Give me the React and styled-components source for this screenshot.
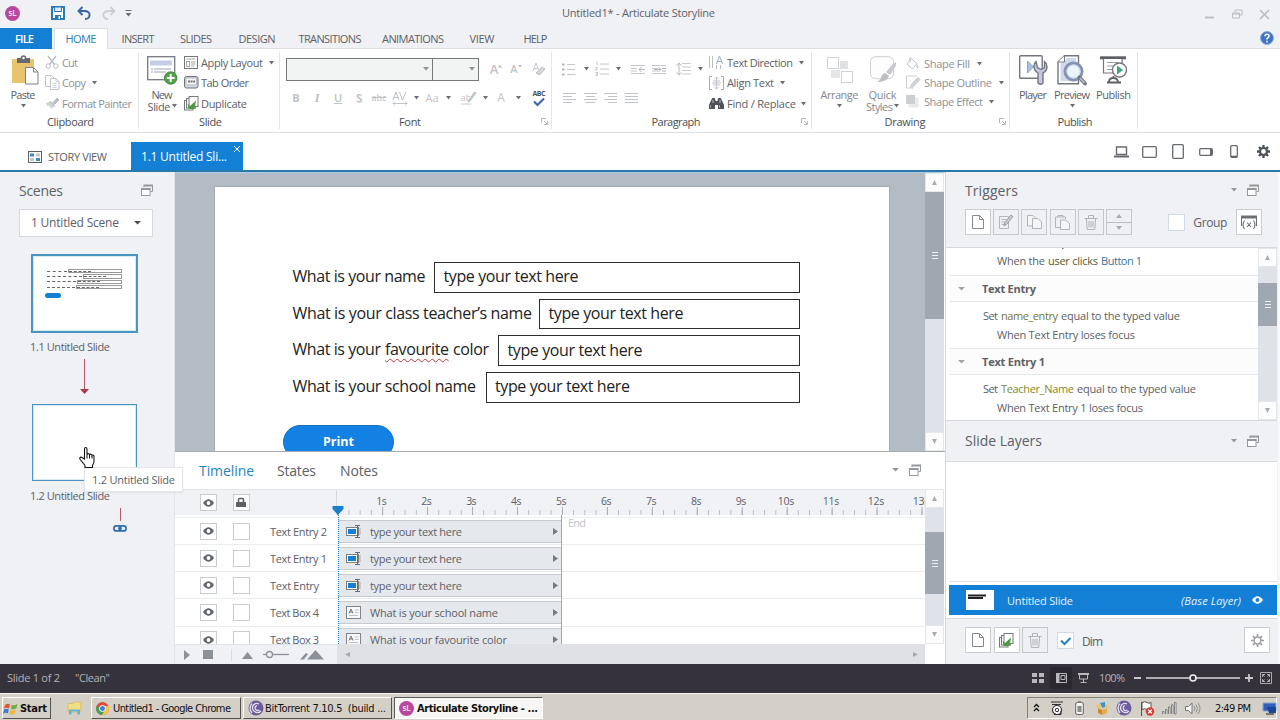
import React, { useLayoutEffect, useRef } from 'react';
import styled, { createGlobalStyle, css } from 'styled-components';

const Global = createGlobalStyle`
  * { box-sizing: border-box; }
  html, body { margin: 0; padding: 0; overflow: hidden; }
  body { font-family: 'Open Sans', 'Noto Sans', sans-serif; font-size: 11px; color: #5c6067; }
`;

const c = {
  panel: '#eff1f5',
  blue: '#1380d6',
  line: '#dcdfe4',
  text: '#5c6067',
  dim: '#8d9095',
  faint: '#c3c6ca',
  track: '#dfe3e9',
  thumb: '#9fa8b1',
};

/* ---------- text fitted to a given advance width ---------- */
const TextSpan = styled.span`
  display: inline-block;
  flex: none;
  white-space: pre;
  font-size: ${p => p.$s || 11}px;
  line-height: ${p => Math.round((p.$s || 11) * 1.36)}px;
  color: ${p => p.$c || 'inherit'};
  font-weight: ${p => p.$b || 400};
  font-style: ${p => (p.$i ? 'italic' : 'normal')};
`;

function T({ w, s, c: color, b, i, children }) {
  const ref = useRef(null);
  useLayoutEffect(() => {
    const el = ref.current;
    el.style.letterSpacing = '0px';
    const n = el.textContent.length;
    if (w && n > 1) {
      const gap = (w - el.getBoundingClientRect().width) / (n - 1);
      el.style.letterSpacing = `${gap}px`;
      el.style.marginRight = `${-gap}px`;
    }
  }, [w, children]);
  return <TextSpan ref={ref} $s={s} $c={color} $b={b} $i={i}>{children}</TextSpan>;
}

/* ---------- icon helpers ---------- */
const Svg = styled.svg`
  display: block;
  flex: none;
  overflow: visible;
  fill: none;
`;
const I = ({ w, h, children, ...r }) => (
  <Svg width={w} height={h} viewBox={`0 0 ${w} ${h}`} {...r}>{children}</Svg>
);
const Caret = ({ color = '#6b6e73', w = 6 }) => (
  <I w={w} h={3.5}><path d={`M0 0H${w}L${w / 2} 3.5Z`} fill={color} /></I>
);

/* ---------- title bar ---------- */
const App_ = styled.div`
  width: 1280px;
  height: 720px;
  display: flex;
  flex-direction: column;
  background: #fff;
  overflow: hidden;
`;
const TitleBar = styled.div`
  height: 28px;
  flex: none;
  display: grid;
  grid-template-columns: 142px 1fr 142px;
  align-items: center;
  padding-bottom: 2px;
  background: ${c.panel};
`;
const QuickAccess = styled.div`
  display: flex;
  align-items: center;
  padding-left: 5px;
`;
const Title = styled.div`
  display: flex;
  justify-content: center;
  padding: 0 3px 1px 0;
`;
const WindowButtons = styled.div`
  display: flex;
  justify-content: flex-end;
  align-items: center;
  gap: 17px;
  padding: 2px 11px 0 0;
`;
const Gap = styled.div`
  flex: none;
  width: ${p => p.$w || 0}px;
`;

const MenuBar = styled.div`
  height: 21px;
  flex: none;
  display: flex;
  background: ${c.panel};
  border-bottom: 1px solid ${c.line};
`;
const MenuTab = styled.div`
  width: ${p => p.$w}px;
  height: 21px;
  display: flex;
  align-items: center;
  justify-content: center;
  padding-bottom: 1px;
  color: ${c.text};
  ${p => p.$file && css`background: ${c.blue}; color: #fff; font-weight: 600; margin-right: 2px; padding-right: 3px;`}
  ${p => p.$active && css`background: #fff; color: #2b7fb8; border: 1px solid ${c.line}; border-bottom: 0; padding-bottom: 2px;`}
`;
const HelpSlot = styled.div`
  margin-left: auto;
  padding: 3px 6px 0 0;
`;

/* ---------- ribbon ---------- */
const Ribbon = styled.div`
  height: 84px;
  flex: none;
  display: flex;
  padding: 3px 0;
  border-bottom: 1px solid ${c.line};
`;
const Group = styled.div`
  width: ${p => p.$w}px;
  flex: none;
  display: flex;
  flex-direction: column;
  border-right: 1px solid #e3e5e8;
`;
const GroupBody = styled.div`
  height: 62px;
  display: flex;
  padding-left: ${p => p.$pl || 0}px;
`;
const GroupLabel = styled.div`
  height: 16px;
  display: grid;
  grid-template-columns: ${p => (p.$plain ? '1fr' : '1fr 9px')};
  align-items: center;
  justify-items: center;
  padding: 0 ${p => (p.$plain ? 0 : 2)}px 0 ${p => (p.$plain ? 3 : 0)}px;
  color: #4b4f55;
`;
const BigButton = styled.div`
  width: ${p => p.$w}px;
  flex: none;
  display: flex;
  flex-direction: column;
  align-items: center;
  color: ${p => (p.$off ? '#85888d' : c.text)};
`;
const BigIcon = styled.div`
  height: 36px;
  display: flex;
  align-items: center;
`;
const BigLine = styled.div`
  height: 12px;
  display: flex;
  align-items: center;
  gap: 1px;
  > span { line-height: 11px; }
`;
const SmallCol = styled.div`
  display: flex;
  flex-direction: column;
  padding-top: ${p => p.$pt || 0}px;
  padding-left: ${p => p.$pl || 0}px;
`;
const SmallButton = styled.div`
  height: ${p => p.$h || 20.5}px;
  display: flex;
  align-items: center;
  color: ${p => (p.$off ? '#8e9196' : c.text)};
`;
const SmallIcon = styled.div`
  width: ${p => p.$w || 17}px;
  display: flex;
  justify-content: flex-start;
`;
const CaretSlot = styled.div`
  margin-left: ${p => p.$ml || 6}px;
`;
const ToolStack = styled.div`
  display: flex;
  flex-direction: column;
  width: ${p => p.$w}px;
  flex: none;
`;
const ToolRow = styled.div`
  height: ${p => p.$h}px;
  display: flex;
  align-items: center;
  color: #bfc2c6;
`;
const Slot = styled.div`
  width: ${p => p.$w}px;
  flex: none;
  display: flex;
  justify-content: center;
  align-items: center;
`;
const Combo = styled.div`
  width: ${p => p.$w}px;
  height: 23px;
  flex: none;
  display: flex;
  align-items: center;
  justify-content: flex-end;
  padding-right: 3px;
  background: #f2f3f3;
  border: 1px solid #76797c;
  & + & { margin-left: -1px; }
`;
const Glyph = styled.span`
  font-size: ${p => p.$s || 11}px;
  line-height: 14px;
  font-weight: ${p => p.$b || 600};
  font-style: ${p => (p.$i ? 'italic' : 'normal')};
  font-family: ${p => (p.$i ? "'Liberation Serif', serif" : 'inherit')};
  text-decoration: ${p => p.$d || 'none'};
  text-shadow: ${p => (p.$shadow ? '1px 1px 0 #dcdee0' : 'none')};
  color: ${p => p.$c || '#bfc2c6'};
`;
const SpellSlot = styled.div`
  width: 28px;
  display: flex;
  flex-direction: column;
  align-items: center;
  padding-left: 2px;
`;

const Launcher = () => (
  <I w={7} h={7}><path d="M.5 5V.5H5M3 3l3 3M6.5 3v3.5H3" stroke="#b4b7bb" /></I>
);

const Small = ({ icon, label, w, caret, off, ml, h, iw }) => (
  <SmallButton $off={off} $h={h}>
    <SmallIcon $w={iw}>{icon}</SmallIcon>
    <T w={w}>{label}</T>
    {caret && <CaretSlot $ml={ml}><Caret w={5} /></CaretSlot>}
  </SmallButton>
);

/* ---------- ribbon icons ---------- */
const PasteIcon = () => (
  <I w={28} h={30}>
    <rect x="1" y="4" width="22" height="24" fill="#e9c46f" />
    <rect x="6" y="3" width="13" height="5" fill="#666a70" /><circle cx="12.500" cy="3" r="2" fill="#fff" stroke="#666a70" strokeWidth="1.500" />
    <path d="M14.500 12.500h8l4.500 4.500v12h-12.500z" fill="#fff" stroke="#7b7e83" /><path d="M22.500 12.500v4.500h4.500" stroke="#7b7e83" />
  </I>
);
const CutIcon = () => (
  <I w={14} h={14}><path d="M3 1l6.500 8.500M11 1L4.500 9.500" stroke="#b9bcc0" strokeWidth="1.400" /><circle cx="3.200" cy="11" r="2.200" stroke="#b9bcc0" /><circle cx="10.800" cy="11" r="2.200" stroke="#b9bcc0" /></I>
);
const CopyIcon = ({ s = '#bfc2c6' }) => (
  <I w={15} h={15}><path d="M.5.5h6l2 2v9h-8z" stroke={s} fill="#fff" /><path d="M5.500 3.500h5.500l3 3v8H5.500z" fill="#fff" stroke={s} /><path d="M11 3.500v3h3M7.500 8.500h4M7.500 10.500h4M7.500 12.500h4" stroke={s} strokeWidth=".8" /></I>
);
const PainterIcon = () => (
  <I w={14} h={13}><path d="M1 6l5-2 4 4-3 4-1.500-2L4 11l.5-2.500L2 9z" fill="#d2d5d8" /><path d="M5 4.500l5 5M8 6l4-5 2 2-4 4z" fill="#babdc1" stroke="#b5b8bb" /></I>
);
const NewSlideIcon = () => (
  <I w={30} h={29}>
    <rect x=".7" y=".7" width="27" height="23" fill="#fff" stroke="#76797f" strokeWidth="1.300" />
    <rect x="3" y="4.500" width="22" height="5" fill="#c4cde4" /><path d="M4 13h2M7 13h17M4 16h2M7 16h12" stroke="#9da3b4" />
    <circle cx="23.700" cy="22" r="6.200" fill="#4fa246" stroke="#3b8937" /><path d="M23.700 18v8M19.700 22h8" stroke="#fff" strokeWidth="2" />
  </I>
);
const LayoutIcon = () => (
  <I w={14} h={13}><rect x=".5" y=".5" width="13" height="12" stroke="#74777c" /><path d="M2.500 3h9M7 6h4.500M7 8h4.500M7 10h3" stroke="#a3a6aa" /><rect x="2.500" y="5.500" width="3" height="5" stroke="#a3a6aa" /></I>
);
const TabOrderIcon = () => (
  <I w={15} h={13}><rect x=".5" y=".5" width="13.500" height="11.500" rx="2" fill="#d5d8dc" stroke="#6f7277" /><rect x="2" y="2" width="10.500" height="7" rx="1" fill="#f3f4f6" stroke="#a3a6aa" strokeWidth=".7" /><path d="M4 5.500h7" stroke="#6f7277" strokeWidth="2" strokeDasharray="2 .6" /></I>
);
const DuplicateIcon = () => (
  <I w={15} h={15}><rect x=".5" y="4.500" width="8.500" height="9.500" fill="#fff" stroke="#75787c" /><rect x="2.500" y="2.500" width="9" height="9.500" fill="#fff" stroke="#75787c" /><rect x="5" y=".5" width="9" height="10" fill="#fff" stroke="#75787c" /><path d="M3.500 7.500l2.500 2.500 6-5.500-1.500 8.500H4.500z" fill="#4d9a45" /></I>
);
const BulletsIcon = () => (
  <I w={14} h={13}><path d="M5 1.500h8M5 6.500h8M5 11.500h8" stroke="#c3c6ca" /><path d="M0 1.500h2.500M0 6.500h2.500M0 11.500h2.500" stroke="#b0b3b7" strokeWidth="1.800" /></I>
);
const NumbersIcon = () => (
  <I w={14} h={14}><path d="M5 2h9M5 7h9M5 12h9M1 0h1v3M.5 5.500h2L.5 8h2M.5 10.500h2v3h-2m0-1.500h2" stroke="#bdc0c4" strokeWidth=".9" /></I>
);
const IndentIcon = ({ out }) => (
  <I w={14} h={9}><path d="M0 .5h14M0 8.500h14M0 3.500h6M0 6h6" stroke="#c3c6ca" /><path d={out ? 'M14 4.500H8M10.500 2L8 4.500 10.500 7' : 'M2 4.500h7M6.500 2L9 4.500 6.500 7M10 3.500h4M10 6h4'} stroke="#aeb1b5" /></I>
);
const SpacingIcon = () => (
  <I w={15} h={14}><path d="M6 1.500h9M6 5h9M6 8.500h9M6 12h9" stroke="#c8cbce" /><path d="M3 1v12M.5 3.500L3 1l2.500 2.500M.5 10.500L3 13l2.500-2.500" stroke="#b4b7bb" /></I>
);
const AlignIcon = ({ kind }) => {
  const d = {
    left: 'M0 .5h13M0 3.500h9M0 6.500h13M0 9.500h9',
    center: 'M0 .5h13M2 3.500h9M0 6.500h13M2 9.500h9',
    right: 'M0 .5h13M4 3.500h9M0 6.500h13M4 9.500h9',
    full: 'M0 .5h13M0 3.500h13M0 6.500h13M0 9.500h13',
  }[kind];
  return <I w={13} h={10}><path d={d} stroke="#c0c3c7" /></I>;
};
const TextDirIcon = () => (
  <I w={14} h={13}><path d="M.5 0v12M3.500 0v12M7.500 9v4M11.500 9v4" stroke="#babdc1" /><path d="M7.500 8L10.500 0l3 8M8.500 5.500h4" stroke="#9fabc8" /></I>
);
const AlignTextIcon = () => (
  <I w={15} h={14}><path d="M3 .5H.5v13H3M12 .5h2.500v13H12" stroke="#a9acb0" /><path d="M3 7h9M7.500 1v12M5.500 3l2-2 2 2M5.500 11l2 2 2-2M4 5h7M4 9h7" stroke="#c0c3c7" /></I>
);
const BinocularsIcon = () => (
  <I w={15} h={12}><path d="M3 1.500Q4.500 0 6 1.500L6.500 4h2L9 1.500Q10.500 0 12 1.500L15 8v4H9V8H6v4H0V8z" fill="#4f5257" /><path d="M1.500 8.500v2M10.500 8.500v2M4 3v3M11 3v3" stroke="#d8dadd" strokeWidth=".8" /></I>
);
const ArrangeIcon = () => (
  <I w={26} h={26}><rect x="13" y="4" width="8" height="8" fill="#dfe1e3" /><rect x="4" y="13" width="9" height="8" fill="#e3e5e7" /><rect x=".5" y=".5" width="11" height="11" fill="#fff" stroke="#cfd1d4" /><rect x="14.500" y="14.500" width="11" height="11" fill="#fff" stroke="#cfd1d4" /></I>
);
const QuickIcon = () => (
  <I w={28} h={28}><rect x="1.500" y=".7" width="23" height="22" rx="5" fill="#fdfdfd" stroke="#cdcfd2" /><path d="M27 6q1 3-2 7l-4 6-4-3 6-7q2-2 4-3z" fill="#c8cacd" /><path d="M16 17l4 3q-2 6-12 6 4-2 4-5 1-3 4-4z" fill="#bcbec2" /></I>
);
const FillIcon = () => (
  <I w={13} h={13}><path d="M5 1.500l6 5-4.500 5.500-5.500-5zM4 0v5" stroke="#c0c3c7" /><path d="M11 7q2 3 1 4t-1.500-.5z" fill="#c0c3c7" /></I>
);
const OutlineIcon = () => (
  <I w={14} h={13}><path d="M11 0H.5v12H8" stroke="#cdd0d3" /><path d="M12 1.500l2 2-6 6.500-3.500 1.500L5.500 8z" fill="#d0d3d6" stroke="#bcbfc3" strokeWidth=".7" /></I>
);
const EffectIcon = () => (
  <I w={13} h={13}><rect x="2.500" y="2.500" width="10" height="10" fill="#e8eaec" /><rect x="0" y="0" width="9" height="9" fill="#cdd0d3" /></I>
);
const PlayerIcon = () => (
  <I w={29} h={31}>
    <rect x=".7" y=".7" width="22.500" height="22.500" rx="1" fill="#fff" stroke="#74777d" strokeWidth="1.400" />
    <path d="M8.500 6v12l6-6z" fill="#aabfe4" stroke="#7a8bb0" strokeWidth=".7" />
    <path d="M17 6.500q-4 4-.5 9.500l2.500 2v10q2.500 2.500 5 0V18q4-2 4-6.500 0-3-2.500-5v6l-3.500 2-3.500-2z" fill="#c2c9e2" stroke="#74777f" strokeWidth="1.400" />
  </I>
);
const PreviewIcon = () => (
  <I w={30} h={31}>
    <path d="M7.500.7H21.500v28H1V7z" fill="#fff" stroke="#74777d" strokeWidth="1.400" /><path d="M10 3h9v23H3.500V9z" fill="#d0daee" /><path d="M7.500.7V7H1" fill="#fff" stroke="#74777d" />
    <circle cx="16.500" cy="16.500" r="8.500" fill="#fff" stroke="#8593b3" strokeWidth="3" /><circle cx="16.500" cy="16.500" r="6.500" fill="#edf3fb" stroke="#c9d7ef" />
    <path d="M22.500 22.500l5.500 6" stroke="#74777d" strokeWidth="4" strokeLinecap="round" /><path d="M23 23l4.500 5" stroke="#b6c1de" strokeWidth="1.800" />
  </I>
);
const PublishIcon = () => (
  <I w={28} h={28}>
    <path d="M0 1.800h26" stroke="#5c5f65" strokeWidth="3" /><path d="M3.500 3v14H22V3" fill="#fff" stroke="#74777d" strokeWidth="1.200" /><path d="M7 6.500h11M7 10h7M7 13.500h7" stroke="#9da0a5" />
    <circle cx="19.500" cy="14" r="7" fill="#fff" stroke="#74777d" strokeWidth="1.400" /><path d="M17 9.500v9l6-4.500z" fill="#3fa57c" />
    <path d="M13.500 20v3M7 26.500h14M9 26q0-4 4.500-4 4 0 4.500 4" stroke="#5c5f65" strokeWidth="1.800" />
  </I>
);

function RibbonBar() {
  return (
    <Ribbon>
      <Group $w={139}>
        <GroupBody $pl={4}>
          <BigButton $w={38}>
            <BigIcon><Gap $w={4} /><PasteIcon /></BigIcon>
            <BigLine><T w={25}>Paste</T></BigLine>
            <BigLine><Caret w={5} /></BigLine>
          </BigButton>
          <SmallCol $pl={3}>
            <Small off icon={<CutIcon />} label="Cut" w={16} />
            <Small off icon={<CopyIcon />} label="Copy" w={24} caret ml={6} />
            <Small off icon={<PainterIcon />} label="Format Painter" w={70} />
          </SmallCol>
        </GroupBody>
        <GroupLabel $plain><T w={47}>Clipboard</T></GroupLabel>
      </Group>

      <Group $w={141}>
        <GroupBody $pl={4}>
          <BigButton $w={38}>
            <BigIcon><NewSlideIcon /></BigIcon>
            <BigLine><T w={21}>New</T></BigLine>
            <BigLine><T w={23}>Slide</T><Caret w={5} /></BigLine>
          </BigButton>
          <SmallCol $pl={3}>
            <Small icon={<LayoutIcon />} label="Apply Layout" w={62} caret ml={6} />
            <Small icon={<TabOrderIcon />} label="Tab Order" w={48} />
            <Small icon={<DuplicateIcon />} label="Duplicate" w={46} />
          </SmallCol>
        </GroupBody>
        <GroupLabel $plain><T w={23}>Slide</T></GroupLabel>
      </Group>

      <Group $w={272}>
        <GroupBody $pl={6}>
          <ToolStack $w={266}>
            <ToolRow $h={34}>
              <Combo $w={147}><Caret color="#8c8f94" /></Combo>
              <Combo $w={47}><Caret color="#8c8f94" /></Combo>
              <Slot $w={7} />
              <Slot $w={20}><Glyph $s={13}>A</Glyph><I w={4} h={9}><path d="M0 2.500L2 0l2 2.500z" fill="#b4b7bb" /></I></Slot>
              <Slot $w={20}><Glyph $s={11}>A</Glyph><I w={4} h={9}><path d="M0 0L2 2.500 4 0z" fill="#b4b7bb" /></I></Slot>
              <Slot $w={24}><I w={13} h={13}><path d="M1 8L4 0l3 8M2 5.500h4" stroke="#c3c6ca" /><path d="M4 10l6-6 3 2-5.500 6z" fill="#d3d5d8" stroke="#bfc2c6" /></I></Slot>
            </ToolRow>
            <ToolRow $h={24}>
              <Slot $w={20}><Glyph $b={700}>B</Glyph></Slot>
              <Slot $w={22}><Glyph $i $s={13}>I</Glyph></Slot>
              <Slot $w={20}><Glyph $d="underline">U</Glyph></Slot>
              <Slot $w={22}><Glyph $shadow>S</Glyph></Slot>
              <Slot $w={18}><Glyph $s={9} $b={400} $d="line-through">abc</Glyph></Slot>
              <Slot $w={24}><I w={14} h={13}><path d="M0 8L3 0l3 8M1 5.500h4M6.500 0l3 8 3.500-8" stroke="#babdc1" /><path d="M0 11.500h14M2 9.500l-2 2 2 2M12 9.500l2 2-2 2" stroke="#babdc1" strokeWidth=".9" /></I></Slot>
              <Slot $w={8}><Caret w={5} /></Slot>
              <Slot $w={24}><Glyph $b={400}>Aa</Glyph></Slot>
              <Slot $w={8}><Caret w={5} /></Slot>
              <Slot $w={28}><Gap $w={6} /><Glyph $s={9} $b={400}>ab</Glyph><I w={6} h={12}><path d="M5 1L-1 9l-2 1 1-2L3.500 0z" stroke="#b4b7bb" fill="#d6d8db" /><path d="M-10 12h10" stroke="#e2e4e6" strokeWidth="2" /></I></Slot>
              <Slot $w={10}><Caret w={5} /></Slot>
              <Slot $w={22}><Glyph $s={12} $b={400}>A</Glyph></Slot>
              <Slot $w={12}><Caret w={5} /></Slot>
              <SpellSlot>
                <T s={7} w={13} b={700} c="#4f5257">ABC</T>
                <I w={12} h={8}><path d="M1 2.500l3.500 3.500L11 -.5" stroke="#3e69ad" strokeWidth="2.200" /></I>
              </SpellSlot>
            </ToolRow>
          </ToolStack>
        </GroupBody>
        <GroupLabel><T w={22}>Font</T><Launcher /></GroupLabel>
      </Group>

      <Group $w={260}>
        <GroupBody $pl={6}>
          <ToolStack $w={151}>
            <ToolRow $h={34}>
              <Slot $w={22}><BulletsIcon /></Slot>
              <Slot $w={12}><Caret w={5} /></Slot>
              <Slot $w={20}><NumbersIcon /></Slot>
              <Slot $w={12}><Caret w={5} /></Slot>
              <Slot $w={28}><IndentIcon out /></Slot>
              <Slot $w={14}><IndentIcon /></Slot>
              <Slot $w={28}><Gap $w={6} /><SpacingIcon /></Slot>
              <Slot $w={12}><Caret w={5} /></Slot>
            </ToolRow>
            <ToolRow $h={24}>
              <Slot $w={22}><AlignIcon kind="left" /></Slot>
              <Slot $w={20}><AlignIcon kind="center" /></Slot>
              <Slot $w={20}><AlignIcon kind="right" /></Slot>
              <Slot $w={22}><AlignIcon kind="full" /></Slot>
            </ToolRow>
          </ToolStack>
          <SmallCol>
            <Small iw={18} icon={<TextDirIcon />} label="Text Direction" w={66} caret ml={6} />
            <Small iw={18} icon={<AlignTextIcon />} label="Align Text" w={47} caret ml={6} />
            <Small iw={18} icon={<BinocularsIcon />} label="Find / Replace" w={69} caret ml={5} />
          </SmallCol>
        </GroupBody>
        <GroupLabel><T w={49}>Paragraph</T><Launcher /></GroupLabel>
      </Group>

      <Group $w={198}>
        <GroupBody $pl={6}>
          <BigButton $w={43} $off>
            <BigIcon><ArrangeIcon /></BigIcon>
            <BigLine><T w={38}>Arrange</T></BigLine>
            <BigLine><Caret w={5} /></BigLine>
          </BigButton>
          <BigButton $w={43} $off>
            <BigIcon><QuickIcon /></BigIcon>
            <BigLine><T w={28}>Quick</T></BigLine>
            <BigLine><T w={27}>Styles</T><Caret w={5} /></BigLine>
          </BigButton>
          <SmallCol $pl={2} $pt={2}>
            <Small iw={18} h={19.2} off icon={<FillIcon />} label="Shape Fill" w={46} caret ml={7} />
            <Small iw={18} h={19.2} off icon={<OutlineIcon />} label="Shape Outline" w={68} caret ml={7} />
            <Small iw={18} h={19.2} off icon={<EffectIcon />} label="Shape Effect" w={59} caret ml={6} />
          </SmallCol>
        </GroupBody>
        <GroupLabel><T w={41}>Drawing</T><Launcher /></GroupLabel>
      </Group>

      <Group $w={128}>
        <GroupBody $pl={4}>
          <BigButton $w={38}>
            <BigIcon><PlayerIcon /></BigIcon>
            <BigLine><T w={28}>Player</T></BigLine>
          </BigButton>
          <BigButton $w={40}>
            <BigIcon><PreviewIcon /></BigIcon>
            <BigLine><T w={36}>Preview</T></BigLine>
            <BigLine><Caret w={5} /></BigLine>
          </BigButton>
          <BigButton $w={43}>
            <BigIcon><PublishIcon /></BigIcon>
            <BigLine><T w={35}>Publish</T></BigLine>
          </BigButton>
        </GroupBody>
        <GroupLabel $plain><T w={35}>Publish</T></GroupLabel>
      </Group>
    </Ribbon>
  );
}

/* ---------- document tabs ---------- */
const DocBar = styled.div`
  height: 39px;
  flex: none;
  display: flex;
  align-items: flex-end;
  border-bottom: 2px solid #2a79a8;
`;
const StoryTab = styled.div`
  width: 131px;
  height: 27px;
  display: flex;
  align-items: center;
  gap: 6px;
  padding-left: 28px;
`;
const SlideTab = styled.div`
  width: 112px;
  height: 28px;
  display: flex;
  align-items: center;
  justify-content: space-between;
  padding: 1px 3px 0 10px;
  background: ${c.blue};
  color: #fff;
`;
const CloseX = styled.div`
  align-self: flex-start;
  padding-top: 3px;
`;
const Devices = styled.div`
  margin-left: auto;
  height: 37px;
  display: flex;
  align-items: center;
  padding-right: 10px;
`;

/* ---------- workspace ---------- */
const Workspace = styled.div`
  height: 492px;
  flex: none;
  display: grid;
  grid-template-columns: 175px 770px 335px;
  grid-template-rows: 492px;
`;
const Scenes = styled.div`
  position: relative;
  background: ${c.panel};
  display: flex;
  flex-direction: column;
  border-right: 1px solid #e1e4e8;
`;
const PanelHead = styled.div`
  height: ${p => p.$h}px;
  flex: none;
  display: flex;
  align-items: center;
  padding: 0 ${p => p.$pr}px 1px ${p => p.$pl}px;
`;
const HeadTools = styled.div`
  margin-left: auto;
  display: flex;
  align-items: center;
  gap: 10px;
`;
const SceneSelect = styled.div`
  width: 134px;
  height: 28px;
  margin-left: 19px;
  display: flex;
  align-items: center;
  justify-content: space-between;
  padding: 0 11px 0 11px;
  background: #fff;
  border: 1px solid #d6d9de;
`;
const Flow = styled.div`
  width: 108px;
  margin: 17px 0 0 30px;
  display: flex;
  flex-direction: column;
  align-items: center;
`;
const Thumb = styled.div`
  width: ${p => (p.$on ? 107 : 105)}px;
  height: ${p => (p.$on ? 79 : 77)}px;
  border: ${p => (p.$on ? 2 : 1)}px solid #4795c0;
  padding: 1px;
  background: #d9eaf4;
`;
const ThumbPage = styled.div`
  height: 100%;
  background: #fff;
  padding: 12px 13px 0 13px;
  display: flex;
  flex-direction: column;
  gap: 1px;
`;
const MiniRow = styled.div`
  display: flex;
  align-items: center;
  height: 4.3px;
`;
const MiniText = styled.div`
  width: ${p => p.$w}px;
  height: 0;
  border-top: 1px dashed #666;
`;
const MiniBox = styled.div`
  flex: 1;
  height: 4.300px;
  margin-left: 1px;
  display: flex;
  align-items: center;
  border: 1px solid #999;
`;
const MiniButton = styled.div`
  width: 16px;
  height: 5px;
  margin: 3px 0 0 -2px;
  border-radius: 3px;
  background: ${c.blue};
`;
const ThumbLabel = styled.div`
  align-self: flex-start;
  height: ${p => p.$h}px;
  padding-top: ${p => p.$pt || 0}px;
  display: flex;
  align-items: center;
`;
const LinkMark = styled.div`
  align-self: flex-end;
  width: 36px;
  display: flex;
  flex-direction: column;
  align-items: center;
`;
const Spacer = styled.div`
  height: 10px;
`;
const LinkGlyph = styled.div`
  padding-top: 4px;
`;
const Tip = styled.div`
  position: absolute;
  z-index: 3;
  left: 84px;
  top: 295px;
  width: 99px;
  height: 25px;
  display: flex;
  align-items: center;
  justify-content: center;
  background: #fff;
  border: 1px solid #e4e6ea;
  box-shadow: 0 1px 2px rgba(0, 0, 0, .06);
`;
const Pointer = styled.div`
  position: absolute;
  z-index: 4;
  left: 79px;
  top: 275px;
`;

/* ---------- stage ---------- */
const Center = styled.div`
  display: flex;
  flex-direction: column;
  min-width: 0;
  min-height: 0;
`;
const StageRow = styled.div`
  height: 280px;
  flex: none;
  display: flex;
  border-bottom: 1px solid #a6abb1;
  border-top: 1px solid #a9cdea;
`;
const Stage = styled.div`
  width: 750px;
  overflow: hidden;
  padding: 14px 36px 0 40px;
  background: #b3bbc4;
`;
const SlidePage = styled.div`
  height: 320px;
  background: #fff;
  box-shadow: 0 0 1px 1px #a5adb5;
  padding: 75px 89px 0 78px;
  display: flex;
  flex-direction: column;
  gap: 6px;
`;
const QRow = styled.div`
  display: flex;
  height: 30.7px;
  flex: none;
  color: #222;
`;
const Question = styled.div`
  width: ${p => p.$w}px;
  flex: none;
  padding-top: 3px;
  margin-left: -.5px;
  display: flex;
  white-space: pre;
`;
const Misspelt = styled.span`
  display: flex;
  text-decoration: underline wavy #c0363c 1px;
  text-underline-offset: 3px;
`;
const Entry = styled.div`
  flex: 1;
  display: flex;
  align-items: center;
  padding-left: 8.5px;
  padding-bottom: 2px;
  border: 1px solid #2d2d2d;
`;
const PrintButton = styled.div`
  width: 111px;
  height: 34px;
  flex: none;
  margin: 16px 0 0 -10px;
  display: flex;
  align-items: center;
  justify-content: center;
  border-radius: 20px;
  background: #1380e4;
  color: #fff;
  border: 1px solid #1870c4;
`;

/* ---------- scrollbar ---------- */
const Bar = styled.div`
  width: 19px;
  flex: none;
  display: flex;
  flex-direction: column;
  background: ${c.track};
`;
const BarEnd = styled.div`
  height: 19px;
  flex: none;
  display: flex;
  align-items: center;
  justify-content: center;
  background: #fcfcfd;
  border: 1px solid #e4e7ea;
`;
const BarThumb = styled.div`
  height: ${p => p.$h}px;
  margin-top: ${p => p.$mt}px;
  display: flex;
  align-items: center;
  justify-content: center;
  background: ${c.thumb};
`;
const Fill = styled.div`flex: 1;`;
const VScroll = ({ mt = 0, h }) => (
  <Bar>
    <BarEnd><I w={5} h={5}><path d="M0 5L2.500 0 5 5z" fill="#a8acb1" /></I></BarEnd>
    <BarThumb $mt={mt} $h={h}><I w={6} h={7}><path d="M0 .5h6M0 3.500h6M0 6.500h6" stroke="#eceff2" /></I></BarThumb>
    <Fill />
    <BarEnd><I w={5} h={5}><path d="M0 0L2.500 5 5 0z" fill="#a8acb1" /></I></BarEnd>
  </Bar>
);

/* ---------- timeline ---------- */
const TimeTabs = styled.div`
  height: 37px;
  flex: none;
  display: flex;
  align-items: center;
  padding: 0 24px 1px 24px;
`;
const TimeTab = styled.div`
  width: ${p => p.$w}px;
  display: flex;
`;
const TimeBody = styled.div`
  flex: 1;
  display: flex;
  min-height: 0;
`;
const TimeMain = styled.div`
  position: relative;
  width: 750px;
  min-height: 0;
  display: flex;
  flex-direction: column;
  overflow: hidden;
`;
const Ruler = styled.div`
  height: 26px;
  flex: none;
  display: flex;
  background: #f1f2f5;
  border-top: 1px solid #e2e5e9;
`;
const RulerLeft = styled.div`
  width: 162px;
  flex: none;
  display: flex;
  align-items: center;
  padding-left: 25px;
  gap: 15.500px;
  border-right: 1px solid #d4d7db;
`;
const RulerScale = styled.div`
  flex: 1;
  overflow: hidden;
  display: flex;
  padding: 4px 0 0 22px;
  background-image:
    linear-gradient(to right, #a9adb2 1px, transparent 1px),
    linear-gradient(to right, #b9bdc2 1px, transparent 1px);
  background-size: 44.960px 8px, 11.240px 5px;
  background-position: .2px 100%, .2px 100%;
  background-repeat: repeat-x;
`;
const Sec = styled.div`
  width: 44.960px;
  flex: none;
  display: flex;
  justify-content: center;
`;
const Tracks = styled.div`
  flex: 1;
  min-height: 0;
  padding-top: 3px;
  overflow: hidden;
`;
const TrackRow = styled.div`
  height: 27.150px;
  display: flex;
  align-items: center;
  border-bottom: 1px solid #e8edf0;
  ${p => p.$first && css`box-shadow: 0 -1px 0 #e8edf0;`}
`;
const TrackLeft = styled.div`
  width: 163px;
  flex: none;
  display: flex;
  align-items: center;
  padding-left: 25px;
`;
const Box = styled.div`
  width: 17px;
  height: 17px;
  flex: none;
  margin-right: ${p => p.$mr || 0}px;
  display: flex;
  align-items: center;
  justify-content: center;
  background: #fff;
  border: 1px solid #c9ccd1;
`;
const Clip = styled.div`
  width: 224px;
  height: 23px;
  display: flex;
  align-items: center;
  padding: 0 4px 0 8px;
  background: #e5e8ec;
  border: solid #c6cacf;
  border-width: 1px 0;
`;
const ClipName = styled.div`
  flex: 1;
  display: flex;
  padding-left: 9px;
`;
const Playhead = styled.div`
  position: absolute;
  left: 157px;
  top: 17px;
  width: 12px;
  height: 138px;
  display: flex;
  flex-direction: column;
  align-items: center;
`;
const PlayLine = styled.div`
  flex: 1;
  width: 0;
  border-left: 1px dotted #2380c4;
`;
const EndMark = styled.div`
  position: absolute;
  left: 386px;
  top: 26px;
  height: 129px;
  padding: 0 0 0 6px;
  border-left: 1px solid #a3a7ac;
`;
const TimeFoot = styled.div`
  height: 20px;
  flex: none;
  display: flex;
`;
const Transport = styled.div`
  width: 162px;
  display: flex;
  align-items: center;
  padding-left: 9px;
  background: ${c.panel};
  border-top: 1px solid #dfe2e6;
`;
const HScroll = styled.div`
  width: 588px;
  display: flex;
  justify-content: space-between;
  align-items: center;
  padding: 0 7px 0 8px;
  background: #dfe1e5;
`;
const TimeScroll = styled.div`
  display: flex;
  height: 155px;
`;
const EyeIcon = ({ color = '#62666c', hole = '#fff' }) => (
  <I w={11} h={8}><path d="M0 4Q5.500-3.500 11 4 5.500 11.500 0 4z" fill={color} /><circle cx="5.500" cy="4" r="1.900" fill={hole} /></I>
);
const EntryIcon = () => (
  <I w={15} h={13}><rect x=".5" y="2.500" width="12" height="8" fill="#fff" stroke="#7b8085" /><rect x="2" y="4" width="8" height="5" fill={c.blue} /><path d="M9 .5h5M9 12.500h5M11.500.5v12" stroke="#66696e" /><path d="M14 3v7" stroke="#c3a0a0" /></I>
);
const TextIcon = () => (
  <I w={15} h={13}><rect x=".5" y=".5" width="14" height="12" fill="#f7f8f9" stroke="#7f8489" /><path d="M3 7.500L5 3l2 4.500M3.700 6h2.600" stroke="#66696e" strokeWidth=".9" /><path d="M9 4h3.500M9 6.500h3.500M3 9.500h9" stroke="#b5b9bd" strokeWidth=".9" /></I>
);
const PopIcon = () => (
  <I w={12} h={12}><path d="M3 3V1.500h8.500v6H9.500" stroke="#94989e" /><path d="M2.500 1.500H12" stroke="#94989e" strokeWidth="2" /><rect x=".5" y="5" width="8.500" height="6.500" fill="#fff" stroke="#94989e" /><path d="M0 5h9.500" stroke="#94989e" strokeWidth="2" /></I>
);
const clips = [
  ['Text Entry 2', 57, 'e', 'type your text here', 92],
  ['Text Entry 1', 57, 'e', 'type your text here', 92],
  ['Text Entry', 49, 'e', 'type your text here', 92],
  ['Text Box 4', 49, 't', 'What is your school name', 128],
  ['Text Box 3', 49, 't', 'What is your favourite color', 137],
];

function Timeline() {
  return (
    <>
      <TimeTabs>
        <TimeTab $w={78}><T s={14} w={55} c="#2583c0">Timeline</T></TimeTab>
        <TimeTab $w={63}><T s={14} w={39}>States</T></TimeTab>
        <TimeTab $w={60}><T s={14} w={38}>Notes</T></TimeTab>
        <HeadTools><Caret color="#94989e" w={7} /><PopIcon /></HeadTools>
      </TimeTabs>
      <TimeBody>
        <TimeMain>
          <Ruler>
            <RulerLeft>
              <Box><EyeIcon /></Box>
              <Box><I w={10} h={9}><path d="M2.500 4V1.500Q2.500.5 3.500.5h3q1 0 1 1V4" stroke="#5c6067" strokeWidth="1.600" /><rect y="4" width="10" height="5" fill="#5c6067" /></I></Box>
            </RulerLeft>
            <RulerScale>
              {[1, 2, 3, 4, 5, 6, 7, 8, 9, 10, 11, 12, 13].map(n => (
                <Sec key={n}><T s={10.5} w={n > 9 ? 16.5 : 10.5}>{`${n}s`}</T></Sec>
              ))}
            </RulerScale>
          </Ruler>
          <Tracks>
            {clips.map(([name, nw, kind, text, tw], i) => (
              <TrackRow key={name} $first={i === 0}>
                <TrackLeft>
                  <Box $mr={15.5}><EyeIcon /></Box>
                  <Box $mr={20.5} />
                  <T w={nw}>{name}</T>
                </TrackLeft>
                <Clip>
                  {kind === 'e' ? <EntryIcon /> : <TextIcon />}
                  <ClipName><T w={tw}>{text}</T></ClipName>
                  <I w={5} h={7}><path d="M0 0l5 3.500L0 7z" fill="#777b81" /></I>
                </Clip>
              </TrackRow>
            ))}
          </Tracks>
          <TimeFoot>
            <Transport>
              <I w={6} h={10}><path d="M0 0l6 5-6 5z" fill="#8c9097" /></I>
              <Gap $w={13} />
              <I w={10} h={9}><path d="M0 0h10v9H0z" fill="#8c9097" /></I>
              <Gap $w={18} /><I w={1} h={12}><path d="M.5 0v12" stroke="#d9dce0" /></I><Gap $w={10} />
              <I w={11} h={6}><path d="M0 7L5.500 0 11 7z" fill="#8c9097" /></I>
              <Gap $w={10} />
              <I w={26} h={7}><path d="M0 3.500h26" stroke="#8c9097" strokeWidth="1.300" /><circle cx="6.500" cy="3.500" r="3" fill={c.panel} stroke="#8c9097" strokeWidth="1.300" /></I>
              <Gap $w={11} />
              <I w={24} h={9}><path d="M0 9.500L6 3l2 1-4 5.500zM7 9.500L15.500 0 24 9.500z" fill="#8c9097" /></I>
            </Transport>
            <HScroll>
              <I w={5} h={5}><path d="M5 0v5L0 2.500z" fill="#a8acb1" /></I>
              <I w={5} h={5}><path d="M0 0v5l5-2.500z" fill="#a8acb1" /></I>
            </HScroll>
          </TimeFoot>
          <Playhead>
            <I w={12} h={9}><path d="M.5 0h11v3L6 9 .5 3z" fill="#1b80cc" /></I>
            <PlayLine />
          </Playhead>
          <EndMark><T w={18} c="#bfc3c8">End</T></EndMark>
        </TimeMain>
        <TimeScroll><VScroll mt={24} h={62} /></TimeScroll>
      </TimeBody>
    </>
  );
}

/* ---------- right side ---------- */
const Right = styled.div`
  display: flex;
  flex-direction: column;
  min-height: 0;
  background: ${c.panel};
  border-left: 1px solid #d5d9de;
  border-right: 2px solid #f8f9fb;
  padding-right: 1px;
`;
const ButtonStrip = styled.div`
  height: ${p => p.$h}px;
  flex: none;
  display: flex;
  align-items: flex-start;
  padding: 0 ${p => p.$pr}px 0 19px;
  gap: 2.200px;
`;
const ToolButton = styled.div`
  width: 26px;
  height: 26px;
  flex: none;
  display: flex;
  align-items: center;
  justify-content: center;
  background: ${p => (p.$off ? '#eff0f3' : '#fff')};
  border: 1px solid ${p => (p.$off ? '#c4c7cc' : '#c8ccd1')};
`;
const SplitButton = styled(ToolButton)`
  flex-direction: column;
`;
const SplitHalf = styled.div`
  width: 100%;
  flex: 1;
  display: flex;
  align-items: center;
  justify-content: center;
  & + & { border-top: 1px solid #b9bcc1; }
`;
const CheckBox = styled.div`
  width: 17px;
  height: 17px;
  flex: none;
  margin: 5px 6px 0 ${p => p.$ml}px;
  display: flex;
  align-items: center;
  justify-content: center;
  background: #fff;
  border: 1px solid #d0dbe4;
`;
const StripLabel = styled.div`
  display: flex;
  padding-top: ${p => p.$pt}px;
`;
const Push = styled.div`
  margin-left: auto;
`;
const TriggerArea = styled.div`
  height: 174px;
  flex: none;
  display: flex;
  border: solid #d5d9de;
  border-width: 1px 0;
  background: #fff;
`;
const TriggerList = styled.div`
  flex: 1;
  padding-left: 4px;
  overflow: hidden;
`;
const TriggerHead = styled.div`
  height: 27px;
  display: flex;
  align-items: center;
  padding-left: 8px;
  gap: 17px;
  background: #fcfcfc;
  border: solid #e3e8ec;
  border-width: 1px 0;
`;
const TriggerBody = styled.div`
  height: 46px;
  padding-top: 4px;
`;
const TriggerLine = styled.div`
  height: 19px;
  display: flex;
  align-items: center;
  padding-left: ${p => (p.$sub ? 47 : 33)}px;
  gap: 3px;
`;
const CutOff = styled.div`
  height: 3px;
  padding-left: 112px;
`;
const PeekEnd = styled.div`
  height: 5px;
`;
const LayerArea = styled.div`
  height: 158px;
  flex: none;
  display: flex;
  flex-direction: column;
  justify-content: flex-end;
  background: #fff;
  padding: 0 0 3px 3px;
  border: solid #d9dde2;
  border-width: 1px 0;
`;
const LayerRow = styled.div`
  height: 30px;
  display: flex;
  align-items: center;
  padding: 0 14px 0 17px;
  margin-top: 3px;
  background: ${c.blue};
  color: #e7f2fb;
`;
const LayerTop = styled.div`
  height: 1px;
  background: #dfe3e7;
`;
const LayerThumb = styled.div`
  width: 28px;
  height: 20px;
  padding: 4px 2px;
  margin-right: 13px;
  background: #fff;
`;
const FootStrip = styled.div`
  display: flex;
  padding: 8px 7px 0 19px;
  gap: 2.500px;
`;
const PageIcon = () => (
  <I w={12} h={14}><path d="M.5.500H7.500L11.500 4.500V13.500H.5z" fill="#fff" stroke="#85898f" /><path d="M7.500.5v4h4" stroke="#85898f" /></I>
);
const TrashIcon = () => (
  <I w={14} h={15}><path d="M.5 3.500h13M4.500 3V.5h5V3M2.500 4l.7 10.500h7.600L11.500 4M5 6v6.500M7 6v6.500M9 6v6.500" stroke="#b0b3b7" /></I>
);
const Gear = ({ size, color, inner, width = 2 }) => (
  <Svg width={size} height={size} viewBox="0 0 16 16">
    <circle cx="8" cy="8" r="4.300" stroke={color} strokeWidth={width} fill={inner} />
    <path d="M8 0v3M8 13v3M0 8h3M13 8h3M2.400 2.400l2 2M11.600 11.600l2 2M2.400 13.600l2-2M11.600 4.400l2-2" stroke={color} strokeWidth={width * 1.1} />
  </Svg>
);

function RightSide() {
  return (
    <Right>
      <PanelHead $h={37} $pl={19} $pr={18}>
        <T s={14} w={53}>Triggers</T>
        <HeadTools><Caret color="#94989e" w={6} /><PopIcon /></HeadTools>
      </PanelHead>
      <ButtonStrip $h={38} $pr={15}>
        <ToolButton><PageIcon /></ToolButton>
        <ToolButton $off><I w={14} h={14}><path d="M.5 1.500h9v12H.5zM2.500 4.500h5M2.500 7h4M2.500 9.500h3" stroke="#b4b7bb" /><path d="M12 0l2 1.500-6.500 8L5 11l.5-3z" fill="#c9ccd0" stroke="#8d9095" strokeWidth=".8" /></I></ToolButton>
        <ToolButton $off><I w={15} h={14}><path d="M.5.500H6L8.500 3v8H.5z" stroke="#b0b3b7" fill="#f4f5f7" /><path d="M5.500 3.500h5.500l3.500 3.500v6.500h-9z" fill="#f4f5f7" stroke="#b0b3b7" /></I></ToolButton>
        <ToolButton $off><I w={15} h={15}><path d="M5 12.500H.5V2H10.500V4M3 2V.5h5V2" stroke="#b0b3b7" /><path d="M5.500 5h5l4 3.500v6h-9z" fill="#f4f5f7" stroke="#b0b3b7" /></I></ToolButton>
        <ToolButton $off><TrashIcon /></ToolButton>
        <SplitButton $off>
          <SplitHalf><I w={6} h={4}><path d="M0 4L3 0l3 4z" fill="#a8abb0" /></I></SplitHalf>
          <SplitHalf><I w={6} h={4}><path d="M0 0l3 4 3-4z" fill="#a8abb0" /></I></SplitHalf>
        </SplitButton>
        <CheckBox $ml={34} />
        <StripLabel $pt={6}><T s={12} w={34}>Group</T></StripLabel>
        <Push><ToolButton><I w={16} h={15}><path d="M.5 1.500h15V11M.5 1.500V11" stroke="#6b6f75" /><path d="M0 2h16" stroke="#6b6f75" strokeWidth="3" /><path d="M3.500 5.500q-3 4.500 0 8.500M12.500 5.500q3 4.500 0 8.500M6 7.500l4 4.500M10 7.500L6 12" stroke="#6b6f75" strokeWidth="1.100" /></I></ToolButton></Push>
      </ButtonStrip>
      <TriggerArea>
        <TriggerList>
          <CutOff><I w={2} h={2}><path d="M0 .5h1.500" stroke="#777" /></I></CutOff>
          <TriggerLine $sub><T w={48}>When the</T><T w={50} c="#585b2c">user clicks</T><T w={41} c="#3a7598">Button 1</T></TriggerLine>
          <PeekEnd />
          <TriggerHead><Caret color="#a0a3a8" w={7} /><T w={54} b={700}>Text Entry</T></TriggerHead>
          <TriggerBody>
            <TriggerLine><T w={15}>Set</T><T w={57} c="#77772f">name_entry</T><T w={119}>equal to the typed value</T></TriggerLine>
            <TriggerLine $sub><T w={138}>When Text Entry loses focus</T></TriggerLine>
          </TriggerBody>
          <TriggerHead><Caret color="#a0a3a8" w={7} /><T w={63} b={700}>Text Entry 1</T></TriggerHead>
          <TriggerBody>
            <TriggerLine><T w={15}>Set</T><T w={73} c="#7d8a2e">Teacher_Name</T><T w={119}>equal to the typed value</T></TriggerLine>
            <TriggerLine $sub><T w={146}>When Text Entry 1 loses focus</T></TriggerLine>
          </TriggerBody>
        </TriggerList>
        <VScroll mt={16} h={43} />
      </TriggerArea>
      <PanelHead $h={40} $pl={19} $pr={18}>
        <T s={14} w={77}>Slide Layers</T>
        <HeadTools><Caret color="#94989e" w={6} /><PopIcon /></HeadTools>
      </PanelHead>
      <LayerArea>
        <LayerTop />
        <LayerRow>
          <LayerThumb><I w={20} h={6}><path d="M0 1.500h18M0 4h15" stroke="#222" strokeWidth="2.200" /></I></LayerThumb>
          <T w={66}>Untitled Slide</T>
          <Push><T w={60} i>(Base Layer)</T></Push>
          <Gap $w={11} />
          <EyeIcon color="#fff" hole={c.blue} />
        </LayerRow>
      </LayerArea>
      <FootStrip>
        <ToolButton><PageIcon /></ToolButton>
        <ToolButton><DuplicateIcon /></ToolButton>
        <ToolButton $off><TrashIcon /></ToolButton>
        <CheckBox $ml={6}><I w={11} h={8}><path d="M1 3.500l3.500 3.500L10.500 1" stroke="#2680c0" strokeWidth="2" /></I></CheckBox>
        <StripLabel $pt={7}><T s={12} w={21}>Dim</T></StripLabel>
        <Push><ToolButton><Gear size={13} color="#96999e" inner="#fff" width={1.8} /></ToolButton></Push>
      </FootStrip>
    </Right>
  );
}

/* ---------- status bar and taskbar ---------- */
const Status = styled.div`
  height: 29px;
  flex: none;
  display: flex;
  align-items: center;
  padding: 0 8px 2px 7px;
  background: #35323c;
  color: #b4b3b8;
`;
const ActiveView = styled.div`
  width: 22px;
  height: 22px;
  display: flex;
  align-items: center;
  justify-content: center;
  background: #2b2831;
  margin: 0 6px;
`;
const Taskbar = styled.div`
  height: 27px;
  flex: none;
  display: flex;
  align-items: center;
  padding: 2px 3px 0 2px;
  background: #d4d0c8;
  border-top: 1px solid #f4f3ef;
  color: #111;
  font-family: 'DejaVu Sans Condensed', 'DejaVu Sans', sans-serif;
`;
const TaskButton = styled.div`
  width: ${p => p.$w}px;
  height: 22px;
  display: flex;
  align-items: center;
  gap: ${p => p.$gap}px;
  padding-left: ${p => (p.$w < 60 ? 1 : 4)}px;
  margin-right: 2px;
  border: 1px solid;
  border-color: ${p => (p.$on ? '#5c5a56 #fff #fff #5c5a56' : '#fff #55534f #55534f #fff')};
  background: ${p => (p.$on ? '#f7f6f4' : '#d4d0c8')};
`;
const Explorer = styled.div`
  width: 38px;
  display: flex;
  justify-content: center;
  padding-left: 4px;
`;
const Tray = styled.div`
  width: 250px;
  height: 22px;
  margin-left: auto;
  display: flex;
  align-items: center;
  border: 1px solid;
  border-color: #85827c #fff #fff #85827c;
`;
const LogoDot = styled.div`
  width: 15px;
  height: 15px;
  flex: none;
  border-radius: 50%;
  display: flex;
  align-items: center;
  justify-content: center;
  background: #b9479f;
  color: #fbeaf6;
  font: 600 8px/8px 'Open Sans', sans-serif;
`;
const Torrent = () => (
  <I w={16} h={16}><circle cx="8" cy="8" r="7.500" fill="#6c5b9e" /><path d="M13 11Q10 14 6.500 11.500T5.500 5Q8 2.500 11 4M11.500 10q-3 1.500-4-1t1.500-3.500M4 13Q0 8 4 3.500" stroke="#e4dff2" strokeWidth="1.300" /></I>
);

export default function App() {
  return (
    <App_>
      <Global />
      <TitleBar>
        <QuickAccess>
          <LogoDot>sL</LogoDot>
          <Gap $w={31} />
          <I w={14} h={14}><path d="M1 1h12v12H1z" fill="#fff" stroke="#2a79b8" strokeWidth="2" /><path d="M3.500 1h7v4.500h-7z" fill="#dfeaf5" stroke="#2a79b8" /><path d="M4 9h6v4H4z" fill="#2a79b8" /><path d="M7.500 10h1.500v3H7.500z" fill="#fff" /></I>
          <Gap $w={12} />
          <I w={14} h={13}><path d="M2 4h6q5 .5 4.500 4.500Q12 12 8 12" stroke="#3c66a6" strokeWidth="2" /><path d="M5.500 0L1.500 4l4 4" stroke="#3c66a6" strokeWidth="2" /></I>
          <Gap $w={11} />
          <I w={14} h={13}><path d="M12 4H6q-5 .5-4.500 4.500Q2 12 6 12" stroke="#cbcdd1" strokeWidth="1.800" /><path d="M8.500 0l4 4-4 4" stroke="#cbcdd1" strokeWidth="1.800" /></I>
          <Gap $w={9} />
          <I w={7} h={7}><path d="M.5.500h6" stroke="#6b6e73" /><path d="M.5 3h6L3.500 6.500z" fill="#6b6e73" /></I>
        </QuickAccess>
        <Title><T w={153}>Untitled1* - Articulate Storyline</T></Title>
        <WindowButtons>
          <I w={10} h={10}><path d="M0 8.500h9" stroke="#bcbec2" strokeWidth="2" /></I>
          <I w={11} h={10}><path d="M3 3V1h7v5H8" stroke="#bcbec2" /><path d="M.5 4h7v5h-7zM.5 5h7" stroke="#bcbec2" /></I>
          <I w={9} h={9}><path d="M0 0l9 9M9 0L0 9" stroke="#b9bbc0" strokeWidth="1.600" /></I>
        </WindowButtons>
      </TitleBar>
      <MenuBar>
        <MenuTab $w={52} $file><T w={19} b={600}>FILE</T></MenuTab>
        <MenuTab $w={54} $active><T w={31}>HOME</T></MenuTab>
        <MenuTab $w={60}><T w={33}>INSERT</T></MenuTab>
        <MenuTab $w={56}><T w={32}>SLIDES</T></MenuTab>
        <MenuTab $w={66}><T w={37}>DESIGN</T></MenuTab>
        <MenuTab $w={80}><T w={63}>TRANSITIONS</T></MenuTab>
        <MenuTab $w={86}><T w={62}>ANIMATIONS</T></MenuTab>
        <MenuTab $w={52}><T w={25}>VIEW</T></MenuTab>
        <MenuTab $w={55}><T w={24}>HELP</T></MenuTab>
        <HelpSlot><I w={14} h={14}><circle cx="7" cy="7" r="6.500" fill="#3f74c4" stroke="#8fb0dd" /><path d="M5 5.300Q5 3.300 7 3.300t2 1.900Q9 6.200 7 7.400v1.200M7 9.800v1.600" stroke="#fff" strokeWidth="1.500" /></I></HelpSlot>
      </MenuBar>
      <RibbonBar />
      <DocBar>
        <StoryTab>
          <I w={14} h={12}><rect x=".5" y=".5" width="13" height="11" fill="#fff" stroke="#5c6067" /><path d="M2 2.500h4v3H2zM8 7h4v3H8z" fill="#3f87c4" /><path d="M8 2.500h4v3H8zM2 7h4v3H2z" fill="#c4c8cd" /></I>
          <T w={59}>STORY VIEW</T>
        </StoryTab>
        <SlideTab>
          <T s={12} w={86}>1.1 Untitled Sli...</T>
          <CloseX><I w={6} h={6}><path d="M0 0l6 6M6 0L0 6" stroke="#fff" /></I></CloseX>
        </SlideTab>
        <Devices>
          <I w={15} h={12}><path d="M2.500 1h10v7.500h-10z" stroke="#66696f" strokeWidth="1.400" /><path d="M0 10.500h15" stroke="#66696f" strokeWidth="2" /></I>
          <Gap $w={13} />
          <I w={15} h={12}><rect x=".7" y=".7" width="13.600" height="10.600" rx="1" stroke="#66696f" strokeWidth="1.300" /></I>
          <Gap $w={15} />
          <I w={12} h={15}><rect x=".7" y=".7" width="10.600" height="13.600" rx="1" stroke="#66696f" strokeWidth="1.300" /></I>
          <Gap $w={15} />
          <I w={14} h={8}><rect x=".7" y=".7" width="12.600" height="6.600" rx="1" stroke="#66696f" strokeWidth="1.300" /><path d="M12 1v6" stroke="#66696f" strokeWidth="2" /></I>
          <Gap $w={17} />
          <I w={8} h={13}><rect x=".7" y=".7" width="6.600" height="11.600" rx="1" stroke="#66696f" strokeWidth="1.300" /><path d="M1 11.500h6" stroke="#66696f" strokeWidth="1.600" /></I>
          <Gap $w={19} />
          <Gear size={13} color="#4b4f56" inner="#fff" width={2.6} />
        </Devices>
      </DocBar>
      <Workspace>
        <Scenes>
          <PanelHead $h={37} $pl={19} $pr={21}>
            <T s={14} w={44}>Scenes</T>
            <HeadTools><PopIcon /></HeadTools>
          </PanelHead>
          <SceneSelect><T s={12} w={88}>1 Untitled Scene</T><Caret color="#4a4d52" w={7} /></SceneSelect>
          <Flow>
            <Thumb $on>
              <ThumbPage>
                <MiniRow><MiniText $w={20} /><MiniBox><MiniText $w={22} /></MiniBox></MiniRow>
                <MiniRow><MiniText $w={35} /><MiniBox><MiniText $w={22} /></MiniBox></MiniRow>
                <MiniRow><MiniText $w={29} /><MiniBox><MiniText $w={22} /></MiniBox></MiniRow>
                <MiniRow><MiniText $w={28} /><MiniBox><MiniText $w={22} /></MiniBox></MiniRow>
                <MiniButton />
              </ThumbPage>
            </Thumb>
            <ThumbLabel $h={26}><T w={80}>1.1 Untitled Slide</T></ThumbLabel>
            <I w={8} h={35}><path d="M4.500 0v31" stroke="#b5596a" /><path d="M0 30h9l-4.500 5z" fill="#a43c4d" /></I>
            <Spacer />
            <Thumb><ThumbPage /></Thumb>
            <ThumbLabel $h={27} $pt={2}><T w={80}>1.2 Untitled Slide</T></ThumbLabel>
            <LinkMark>
              <I w={1} h={13}><path d="M.5 0v13" stroke="#b5596a" /></I>
              <LinkGlyph><I w={14} h={7}><rect x=".9" y=".9" width="7" height="5" rx="2.500" stroke="#2f6fb0" strokeWidth="1.700" /><rect x="6.100" y=".9" width="7" height="5" rx="2.500" stroke="#2f6fb0" strokeWidth="1.700" /></I></LinkGlyph>
            </LinkMark>
          </Flow>
          <Tip><T w={83}>1.2 Untitled Slide</T></Tip>
          <Pointer>
            <I w={16} h={21}><path d="M5.500 12V2q0-1.500 1.200-1.500T8 2v5.500q.5-1 1.500-.8t1 1.200q.5-1 1.500-.6t1 1.200q.5-.7 1.300-.3t.7 1.500v4.500q0 2-1.500 4.200V20.500H6v-2L1.200 12.500q-1-1.700.2-2.300 1-.4 2 .6z" fill="#fff" stroke="#111" strokeWidth="1.100" /><path d="M8 7.500v4M10.500 8v3.500M13 9v2.500" stroke="#111" /></I>
          </Pointer>
        </Scenes>
        <Center>
          <StageRow>
            <Stage>
              <SlidePage>
                <QRow><Question $w={141.5}><T s={16} w={133}>What is your name</T></Question><Entry><T s={16} w={135}>type your text here</T></Entry></QRow>
                <QRow><Question $w={246.5}><T s={16} w={239.500}>What is your class teacher’s name</T></Question><Entry><T s={16} w={135}>type your text here</T></Entry></QRow>
                <QRow><Question $w={205.5}><T s={16} w={88.500}>What is your</T><Gap $w={4} /><Misspelt><T s={16} w={64}>favourite</T></Misspelt><Gap $w={4} /><T s={16} w={36}>color</T></Question><Entry><T s={16} w={135}>type your text here</T></Entry></QRow>
                <QRow><Question $w={193}><T s={16} w={183.500}>What is your school name</T></Question><Entry><T s={16} w={135}>type your text here</T></Entry></QRow>
                <PrintButton><T s={12.5} w={31} b={700}>Print</T></PrintButton>
              </SlidePage>
            </Stage>
            <VScroll mt={0} h={127} />
          </StageRow>
          <Timeline />
        </Center>
        <RightSide />
      </Workspace>
      <Status>
        <T w={53}>Slide 1 of 2</T><Gap $w={15} /><T w={35}>"Clean"</T>
        <Push />
        <I w={12} h={10}><path d="M0 0h5v4H0zM7 0h5v4H7zM0 6h5v4H0zM7 6h5v4H7z" fill="#b9b8bd" /></I>
        <ActiveView><I w={11} h={10}><path d="M.5.500H10.500V9.500H.5z" stroke="#b9b8bd" /><path d="M0 0h3.500v10H0z" fill="#b9b8bd" /><path d="M5 2.500h4v4H5z" stroke="#b9b8bd" /></I></ActiveView>
        <I w={11} h={10}><path d="M0 1h11" stroke="#b9b8bd" strokeWidth="2" /><path d="M1.500 1v5h8V1M5.500 6v3M2.500 9.500h6" stroke="#b9b8bd" /></I>
        <Gap $w={10} /><T w={26}>100%</T><Gap $w={9} />
        <I w={7} h={2}><path d="M0 1h7" stroke="#c8c7cc" strokeWidth="2" /></I>
        <Gap $w={5} />
        <I w={94} h={8}><path d="M0 4h94" stroke="#d8d7dc" strokeWidth="1.300" /><circle cx="47" cy="4" r="3" fill="#35323c" stroke="#eee" strokeWidth="1.600" /></I>
        <Gap $w={5} />
        <I w={8} h={8}><path d="M0 4h8M4 0v8" stroke="#c8c7cc" strokeWidth="1.800" /></I>
        <Gap $w={7} />
        <I w={12} h={12}><path d="M.5.500h11v11H.5zM2.500 5V2.500H5M7 2.500h2.500V5M2.500 7v2.500H5M7 9.500h2.500V7M2.500 2.500l2 2M9.500 2.500l-2 2M2.500 9.500l2-2M9.500 9.500l-2-2" stroke="#b9b8bd" strokeWidth=".9" /></I>
      </Status>
      <Taskbar>
        <TaskButton $w={49} $gap={2}>
          <I w={14} h={14}><path d="M1 4q3-2 5-.5L5 7.500Q3 6 0 7.500z" fill="#e2572e" /><path d="M7.500 4Q10 5 13.500 3l-1 4q-3 2-5.500 1z" fill="#6fae3c" /><path d="M0 8.500q3-1.500 4.700 0L4 12.500q-2-1.500-5 0z" fill="#3b7fd0" /><path d="M6.500 9q3 1 5.500-.5l-1 4q-3 1.500-5.500.5z" fill="#f0bb33" /></I>
          <T w={27} b={700}>Start</T>
        </TaskButton>
        <Explorer><I w={15} h={14}><path d="M1 2.500h5l1-1.500h7v10H1z" fill="#f2dd83" stroke="#d0b658" strokeWidth=".7" /><path d="M2 13.500v-5h11v5h-2.500v-3h-6v3z" fill="#62b3dc" /></I></Explorer>
        <TaskButton $w={150} $gap={4}>
          <I w={13} h={13}><circle cx="6.500" cy="6.500" r="6.500" fill="#dd4b3d" /><path d="M1 3.200A6.500 6.500 0 0 0 6 13l3-5.500H4z" fill="#3fa45a" /><path d="M6 13a6.500 6.500 0 0 0 6.500-9H7L9 8z" fill="#f5c63a" /><circle cx="6.500" cy="6.500" r="3" fill="#3f7ed8" stroke="#fff" /></I>
          <T w={118}>Untitled1 - Google Chrome</T>
        </TaskButton>
        <TaskButton $w={149} $gap={1}><Torrent /><T w={121}>BitTorrent 7.10.5  (build ...</T></TaskButton>
        <TaskButton $w={149} $gap={3} $on><LogoDot>sL</LogoDot><T w={121} b={700}>Articulate Storyline - ...</T></TaskButton>
        <Tray>
          <Slot $w={17}><I w={5} h={8}><path d="M0 3l2.500-2.500L5 3M0 7l2.500-2.500L5 7" stroke="#111" strokeWidth="1.300" /></I></Slot>
          <Slot $w={23}><I w={12} h={14}><path d="M0 1h12M1 3.500h9" stroke="#333" strokeWidth="1.200" /><circle cx="6" cy="9" r="4.500" fill="#fff" stroke="#333" strokeWidth="1.200" /><circle cx="6" cy="9" r="1.700" stroke="#333" /><path d="M10 10v3.500H3" stroke="#333" /></I></Slot>
          <Slot $w={23}><I w={9} h={14}><rect x=".7" y="1.500" width="7.600" height="12" rx="1.500" fill="#f2f2f0" stroke="#666" /><path d="M3 0h3v1.500H3zM2.500 5h4v6h-4z" fill="#8b8b88" /></I></Slot>
          <Slot $w={22}><I w={13} h={13}><path d="M2 6l4.500 2v5L2 11z" fill="#d18a2b" /><path d="M11 6L6.500 8v5l4.500-2z" fill="#e8ab48" /><path d="M0 4l3-2 3.500 2L3 6.500zM13 4l-3-2-3.500 2L10 6.500z" fill="#f0c268" /><path d="M4 1l5-1v5L6.500 6z" fill="#3e93cc" /></I></Slot>
          <Slot $w={22}><Torrent /></Slot>
          <Slot $w={23}><I w={14} h={15}><path d="M1.500 15V1M2 1.500q3-1.500 5 0t4 0v7q-2 1.500-4 0t-5 0z" fill="#fff" stroke="#555" /><circle cx="10" cy="10.500" r="4.200" fill="#d23b30" /><path d="M8.200 8.700l3.600 3.600M11.800 8.700l-3.600 3.600" stroke="#fff" strokeWidth="1.300" /></I></Slot>
          <Slot $w={22}><I w={15} h={12}><path d="M.5 12V9.500h1.500V12M3.500 12V7.500H5V12M6.500 12V5H8v7M9.500 12V2.800H11V12M12.500 12V.5H14V12z" fill="#fff" stroke="#777" strokeWidth=".9" /></I></Slot>
          <Slot $w={24}><I w={15} h={13}><path d="M.5 4.500h3L7 1v11L3.500 8.500h-3z" fill="#f4f4f2" stroke="#777" /><path d="M9 4q2 2.500 0 5M11 2.500q3 4 0 8M13 1q4 5.500 0 11" stroke="#888" strokeWidth=".9" /></I></Slot>
          <Gap $w={11} />
          <T w={36}>2:49 PM</T>
          <Gap $w={12} />
          <I w={14} h={13}><path d="M0 1h13v8H0z" fill="#2e5fbd" stroke="#8fa4c9" /><path d="M4 5h9v6H6z" fill="#1f4594" /><path d="M3 12h8" stroke="#555" strokeWidth="1.500" /></I>
        </Tray>
      </Taskbar>
    </App_>
  );
}
